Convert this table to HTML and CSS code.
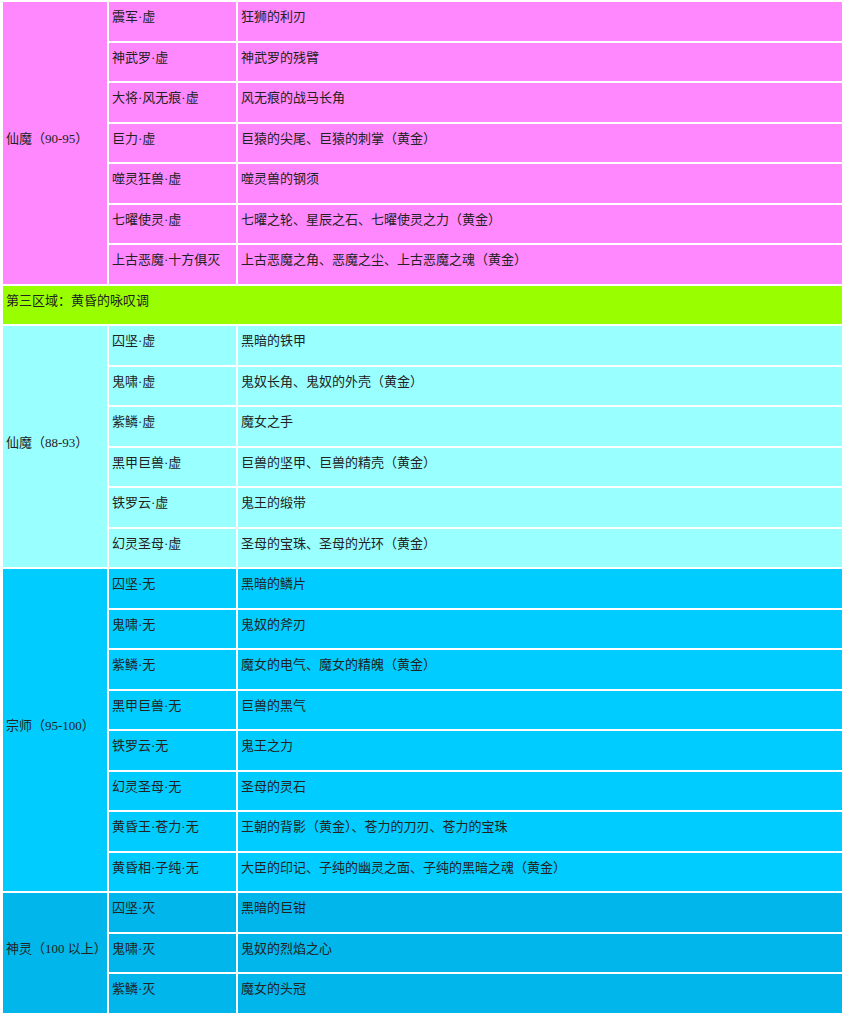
FILE: index.html
```html
<!DOCTYPE html>
<html lang="zh">
<head>
<meta charset="utf-8">
<title>区域表</title>
<link rel="stylesheet" href="styles.css">
</head>
<body>
<table class="tbl">
  <colgroup>
    <col class="c1"><col class="c2"><col class="c3">
  </colgroup>
  <tbody>
    <tr class="pink"><td rowspan="7" class="tier">仙魔（90-95）</td><td>震军·虚</td><td>狂狮的利刃</td></tr>
    <tr class="pink"><td>神武罗·虚</td><td>神武罗的残臂</td></tr>
    <tr class="pink"><td>大将·风无痕·虚</td><td>风无痕的战马长角</td></tr>
    <tr class="pink"><td>巨力·虚</td><td>巨猿的尖尾、巨猿的刺掌（黄金）</td></tr>
    <tr class="pink"><td>噬灵狂兽·虚</td><td>噬灵兽的钢须</td></tr>
    <tr class="pink"><td>七曜使灵·虚</td><td>七曜之轮、星辰之石、七曜使灵之力（黄金）</td></tr>
    <tr class="pink"><td>上古恶魔·十方俱灭</td><td>上古恶魔之角、恶魔之尘、上古恶魔之魂（黄金）</td></tr>

    <tr class="green"><td colspan="3">第三区域：黄昏的咏叹调</td></tr>

    <tr class="cyan"><td rowspan="6" class="tier">仙魔（88-93）</td><td>囚坚·虚</td><td>黑暗的铁甲</td></tr>
    <tr class="cyan"><td>鬼啸·虚</td><td>鬼奴长角、鬼奴的外壳（黄金）</td></tr>
    <tr class="cyan"><td>紫鳞·虚</td><td>魔女之手</td></tr>
    <tr class="cyan"><td>黑甲巨兽·虚</td><td>巨兽的坚甲、巨兽的精壳（黄金）</td></tr>
    <tr class="cyan"><td>铁罗云·虚</td><td>鬼王的缎带</td></tr>
    <tr class="cyan"><td>幻灵圣母·虚</td><td>圣母的宝珠、圣母的光环（黄金）</td></tr>

    <tr class="blue"><td rowspan="8" class="tier">宗师（95-100）</td><td>囚坚·无</td><td>黑暗的鳞片</td></tr>
    <tr class="blue"><td>鬼啸·无</td><td>鬼奴的斧刃</td></tr>
    <tr class="blue"><td>紫鳞·无</td><td>魔女的电气、魔女的精魄（黄金）</td></tr>
    <tr class="blue"><td>黑甲巨兽·无</td><td>巨兽的黑气</td></tr>
    <tr class="blue"><td>铁罗云·无</td><td>鬼王之力</td></tr>
    <tr class="blue"><td>幻灵圣母·无</td><td>圣母的灵石</td></tr>
    <tr class="blue"><td>黄昏王·苍力·无</td><td>王朝的背影（黄金）、苍力的刀刃、苍力的宝珠</td></tr>
    <tr class="blue"><td>黄昏相·子纯·无</td><td>大臣的印记、子纯的幽灵之面、子纯的黑暗之魂（黄金）</td></tr>

    <tr class="deep"><td rowspan="3" class="tier">神灵（100 以上）</td><td>囚坚·灭</td><td>黑暗的巨钳</td></tr>
    <tr class="deep"><td>鬼啸·灭</td><td>鬼奴的烈焰之心</td></tr>
    <tr class="deep"><td>紫鳞·灭</td><td>魔女的头冠</td></tr>
  </tbody>
</table>
</body>
</html>
```

FILE: styles.css
```css
html, body {
  margin: 0;
  padding: 0;
  background: #ffffff;
}

.tbl {
  margin: 0 0 0 1px;
  border-collapse: separate;
  border-spacing: 2px;
  table-layout: fixed;
  width: 843px;
  font-family: "Liberation Serif", "Noto Sans CJK SC", serif;
  font-size: 13px;
  color: #222222;
}

.c1 { width: 104px; }
.c2 { width: 127px; }
.c3 { width: 604px; }

.tbl tr { height: 38.5px; }

.tbl td {
  padding: 0 3px 8px 3px;
  line-height: 16px;
  vertical-align: middle;
  white-space: nowrap;
  overflow: hidden;
}

.tbl td.tier {
  padding-left: 3px;
}

.pink td { background: #ff88ff; }
.green td { background: #99ff00; }
.cyan td { background: #99ffff; }
.blue td { background: #00ccff; }
.deep td { background: #00b6ea; }
```
